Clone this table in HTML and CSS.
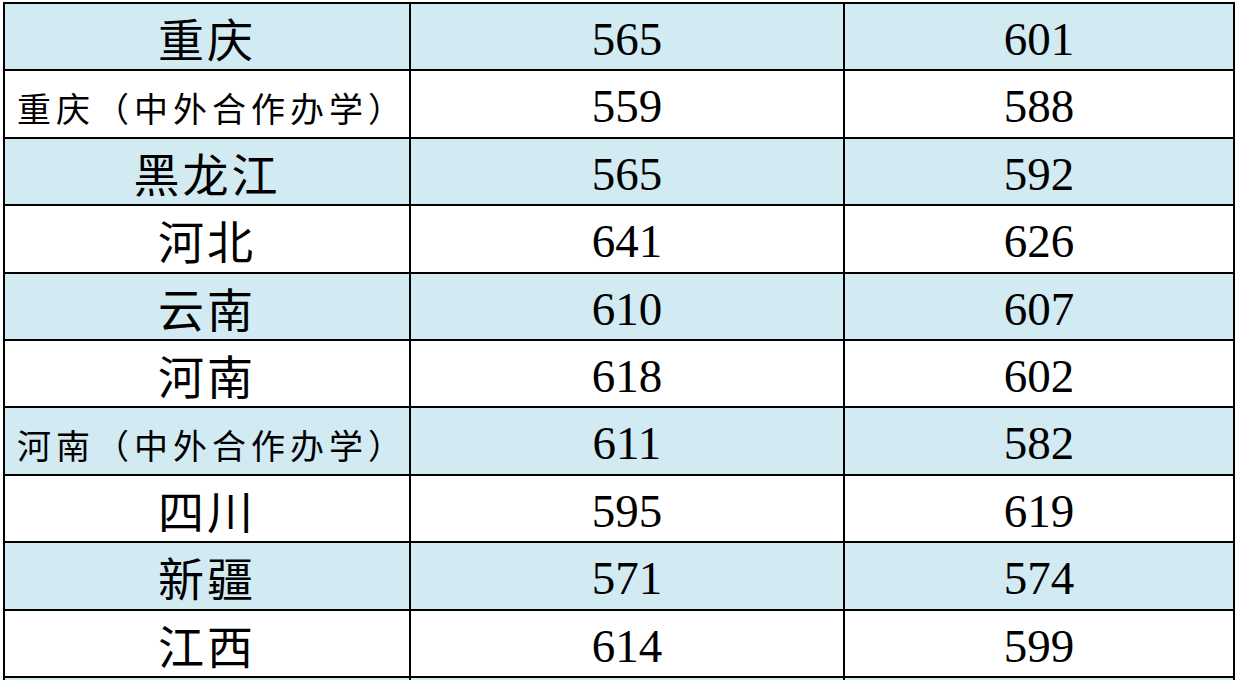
FILE: index.html
```html
<!DOCTYPE html>
<html lang="zh-CN">
<head>
<meta charset="utf-8">
<title>分数线</title>
<link rel="stylesheet" href="styles.css">
</head>
<body>
<div class="frame">
<div class="sheet">
  <div class="row blue"><div class="cell name">重庆</div><div class="cell num">565</div><div class="cell num">601</div></div>
  <div class="row"><div class="cell name small">重庆（中外合作办学）</div><div class="cell num">559</div><div class="cell num">588</div></div>
  <div class="row blue"><div class="cell name">黑龙江</div><div class="cell num">565</div><div class="cell num">592</div></div>
  <div class="row"><div class="cell name">河北</div><div class="cell num">641</div><div class="cell num">626</div></div>
  <div class="row blue"><div class="cell name">云南</div><div class="cell num">610</div><div class="cell num">607</div></div>
  <div class="row"><div class="cell name">河南</div><div class="cell num">618</div><div class="cell num">602</div></div>
  <div class="row blue"><div class="cell name small">河南（中外合作办学）</div><div class="cell num">611</div><div class="cell num">582</div></div>
  <div class="row"><div class="cell name">四川</div><div class="cell num">595</div><div class="cell num">619</div></div>
  <div class="row blue"><div class="cell name">新疆</div><div class="cell num">571</div><div class="cell num">574</div></div>
  <div class="row"><div class="cell name">江西</div><div class="cell num">614</div><div class="cell num">599</div></div>
  <div class="row blue"><div class="cell name"></div><div class="cell num"></div><div class="cell num"></div></div>
</div>
</div>
</body>
</html>
```

FILE: styles.css
```css
html, body {
  margin: 0;
  padding: 0;
  background: #ffffff;
  overflow: hidden;
}

.frame {
  height: 680px;
  overflow: hidden;
}

.sheet {
  margin: 2px 0 0 3px;
  width: 1232px;
  border-left: 2px solid #000;
  border-top: 2px solid #000;
  box-sizing: border-box;
}

.row {
  display: grid;
  grid-template-columns: 406px 434px 390px;
  height: 67.4px;
}

.row.blue {
  background: #d2eaf2;
}

.cell {
  border-right: 2px solid #000;
  border-bottom: 2px solid #000;
  box-sizing: border-box;
  text-align: center;
  color: #000;
  white-space: nowrap;
  overflow: hidden;
}

.num {
  font-family: "Liberation Serif", "Times New Roman", serif;
  font-size: 47px;
  line-height: 66px;
  padding-top: 2px;
}

.name {
  font-family: "Noto Sans CJK SC", "Noto Sans", sans-serif;
  font-size: 46px;
  line-height: 66px;
  letter-spacing: 3px;
  font-weight: 400;
}

.name.small {
  font-size: 34px;
  letter-spacing: 5px;
  padding: 4px 0 0 10px;
}
```
